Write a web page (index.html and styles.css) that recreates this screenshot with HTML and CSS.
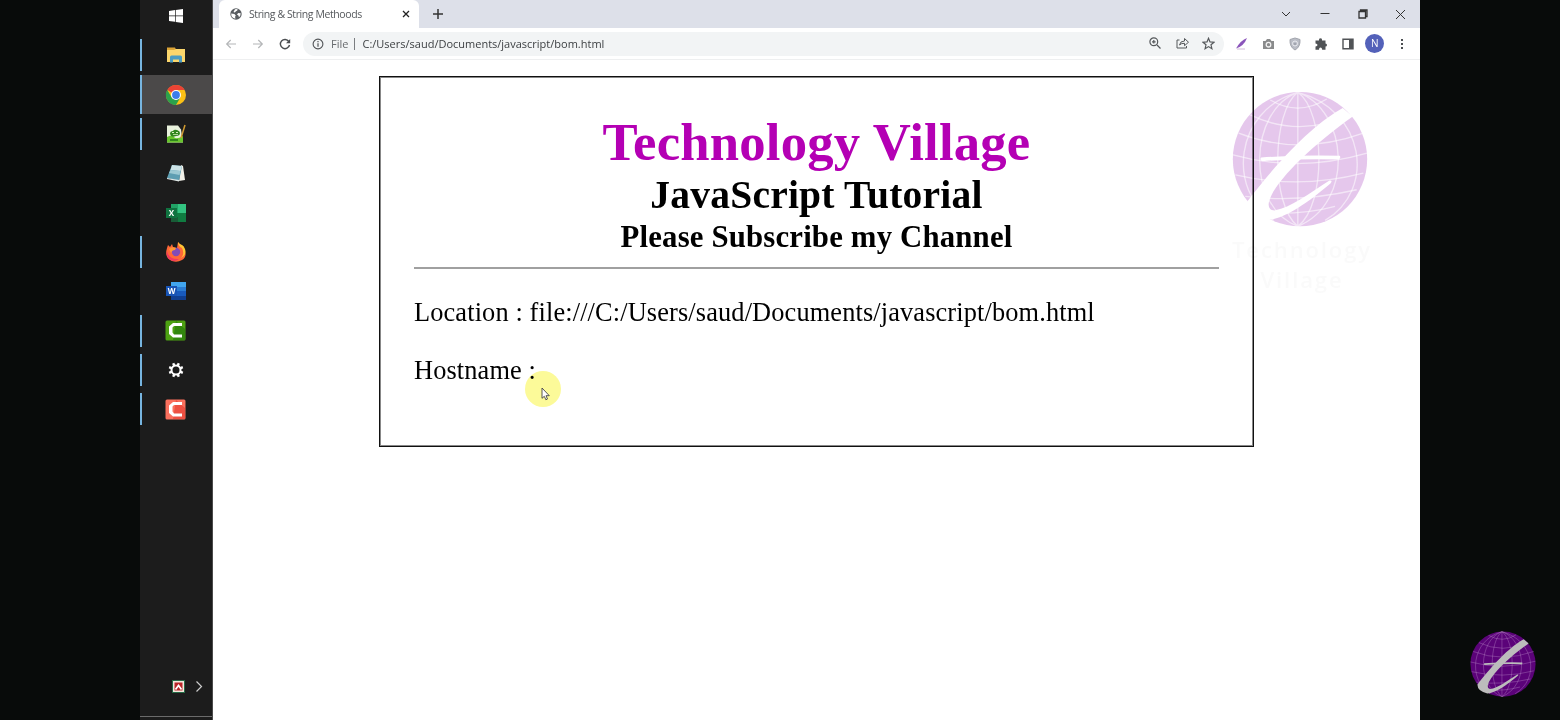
FILE: index.html
```
<!DOCTYPE html>
<html lang="en">
<head>
<meta charset="utf-8">
<title>String &amp; String Methoods</title>
<link rel="stylesheet" href="styles.css">
</head>
<body>
<svg class="defs" aria-hidden="true">
  <defs>
    <symbol id="globe" viewBox="50 48 409 409">
      <circle class="disc" cx="254.500" cy="253" r="202"/>
      <g class="grid">
        <path d="M248 52V455M248 52C170 110 165 390 248 455M248 52C330 110 335 390 248 455M248 52C100 105 90 395 248 455M248 52C400 105 420 385 248 455M248 52C55 105 35 350 175 437M248 52C450 105 485 345 330 437"/>
        <path d="M165 75Q250 125 335 72M105 120Q250 190 410 120M70 175Q250 245 445 175M53 240Q250 295 456 235M60 300Q250 345 445 295M90 365Q250 385 425 345M150 415Q270 420 360 395"/>
      </g>
      <g class="stroke">
        <path d="M383 99C310 140 215 225 96 380Q95 420 158 436C210 430 270 390 346 326Q354 316 343 317C280 358 225 398 180 407C158 408 155 390 168 363C200 300 300 205 413 125Z"/>
        <path d="M138 248Q255 240 374 243Q378 248 372 254Q255 251 140 259Q132 254 138 248Z"/>
      </g>
    </symbol>
  </defs>
</svg>

<div class="screen">
  <nav class="taskbar">
    <div class="app"><svg width="14" height="14" viewBox="0 0 14 14"><path fill="#fff" d="M0 2L6 1.100V6.500H0zM6.700 1L14 0V6.500H6.700zM0 7.300H6V12.800L0 12zM6.700 7.300H14V14L6.700 12.900z"/></svg></div>
    <div class="app open"><svg width="20" height="18" viewBox="0 0 20 18"><path fill="#dca436" d="M1 1.500h8l1 2h9v12H1z"/><path fill="#fbd66c" d="M1 4h7l2-1h9v13H1z"/><path fill="#4b9cc2" d="M4 16.500V11q0-1.500 1.500-1.500h9Q16 9.500 16 11v5.500h-3v-3H7v3z"/></svg></div>
    <div class="app open active"><svg width="22" height="22" viewBox="0 0 22 22"><circle cx="11" cy="11" r="10" fill="#fbc116"/><path fill="#ea4335" d="M11 11L2.300 6A10 10 0 0 1 19.700 6H11z"/><path fill="#2ba24c" d="M2.300 6A10 10 0 0 0 11 21L15.300 13.500 11 11 6.700 13.500z"/><circle cx="11" cy="11" r="5" fill="#fff"/><circle cx="11" cy="11" r="3.900" fill="#3b7de8"/></svg></div>
    <div class="app open"><svg width="20" height="20" viewBox="0 0 20 20"><path fill="#e9f2dd" d="M1 1.500h11l3 4 2 13H1z"/><path fill="#69c52e" d="M1 13q5-3 7 0t9-1v6.500H1z"/><path fill="#32861e" d="M4 10q0-3 3-3 1-2 4-1 3 1 3 3 0 3-4 3-5 2-6-2M4 15h8v2H4z"/><path fill="#d6edbd" d="M6 8h2v1H6zM10 8h2v1h-2zM7 10h5v.8H7z"/><path stroke="#d19b31" stroke-width="1.500" d="M19 1l-4 13"/></svg></div>
    <div class="app"><svg width="20" height="20" viewBox="0 0 20 20"><path fill="#f1f0e8" d="M15 2l2 1 2 14-6 1z"/><path fill="#5d9eb2" d="M6 2l10 1-3 15L1 15z"/><path fill="#cce3e7" d="M6 2l10 1-1.500 5L4.500 7z"/><path fill="#9cc9d3" d="M4.500 7l10 1-1 4-10.500-2z"/><path fill="#e1e9e7" d="M1 15l12 2v1.500L1 16z"/></svg></div>
    <div class="app"><svg width="20" height="20" viewBox="0 0 20 20"><path fill="#21a366" d="M5 1h7v9H5z"/><path fill="#33c481" d="M12 1h8v9h-8z"/><path fill="#107c41" d="M5 10h15v9H5z"/><path fill="#185c37" d="M5 14h7v5H5z"/><path fill="#107340" d="M0 5h11v10H0z"/><text class="letter" x="5.500" y="13">X</text></svg></div>
    <div class="app open"><svg width="22" height="22" viewBox="0 0 22 22"><path fill="#ff6738" d="M2 7l1-3 2 2 2-3 1 3 4 1 1-6q2 3 5 4l2 5q2 6-3 9t-10 1Q-1 17 2 7"/><path fill="#ffc533" d="M13 1q0 4 4 6 3 6-1 10 6-3 4-9-1-3-3-4-3-1-4-3"/><path fill="#f13860" d="M2 10q2 9 12 8-5 4-10 0-3-3-2-8"/><circle cx="11" cy="11" r="4.200" fill="#814cb7"/><path fill="#ff9835" d="M4 8q3-3 7-1l-1 2q-3 0-4 3z"/></svg></div>
    <div class="app"><svg width="20" height="20" viewBox="0 0 20 20"><path fill="#41a5ee" d="M5 1h15v5H5z"/><path fill="#2b7cd3" d="M5 6h15v4H5z"/><path fill="#185abd" d="M5 10h15v5H5z"/><path fill="#103f91" d="M5 15h15v4H5z"/><path fill="#1854b5" d="M0 5h11v10H0z"/><text class="letter" x="5.500" y="13">W</text></svg></div>
    <div class="app open"><svg width="21" height="21" viewBox="0 0 21 21"><rect x=".5" y=".5" width="20" height="20" rx="1.500" fill="#4da112"/><path fill="#32870e" d="M11 1l9 8v11H8z"/><path fill="#fff" d="M17 3v3H9L7.500 7.500v5L9 14.500h8v3H8L4 14V6.500L8 3z"/></svg></div>
    <div class="app open"><svg width="16" height="16" viewBox="0 0 16 16"><path fill="none" stroke="#fff" stroke-width="2.400" d="M9.700 3.800L10.800 1.200M12.200 6.300l2.600-1.100M12.200 9.700l2.600 1.100M9.700 12.200l1.100 2.600M6.300 12.200l-1.100 2.600M3.800 9.700l-2.600 1.100M3.800 6.300L1.200 5.200M6.300 3.800L5.200 1.200"/><circle cx="8" cy="8" r="4.500" fill="none" stroke="#fff" stroke-width="2"/></svg></div>
    <div class="app open"><svg width="21" height="21" viewBox="0 0 21 21"><rect x=".5" y=".5" width="20" height="20" rx="1.500" fill="#fa705d"/><path fill="#ed5042" d="M11 1l9 8v11H8z"/><path fill="#fff" d="M17 3v3H9L7.500 7.500v5L9 14.500h8v3H8L4 14V6.500L8 3z"/></svg></div>
    <div class="tray">
      <svg width="13" height="13" viewBox="0 0 13 13"><path fill="#256a46" d="M0 0h13v13H0z"/><path fill="#f4e9df" d="M1 1h11v11H1z"/><path fill="#b92629" d="M2.500 2.500h8v8h-8z"/><path fill="none" stroke="#fff" stroke-width="1.700" d="M3.500 9.500l3-4 3 4"/></svg>
      <svg width="8" height="13" viewBox="0 0 8 13"><path fill="none" stroke="#ccc" stroke-width="1.200" d="M1.500 1.500l5 5-5 5"/></svg>
    </div>
  </nav>

  <div class="browser">
    <header class="tabs">
      <div class="tab">
        <svg width="12" height="12" viewBox="0 0 12 12"><circle cx="6" cy="6" r="5.700" fill="#5a5e62"/><path fill="#fff" d="M1.200 5.500l3.200.4 1.400 1.500-.7 1.300.3 2Q1 10 1.200 5.500M5 1.300l2.500-.2-.2 1.500-1.600 1-.9 1L3.500 4zM8.200 5l2.500.3q0 2.700-1.800 4L8.600 7.700 7 6.500z"/></svg>
        <span class="title">String &amp; String Methoods</span>
        <svg class="close" width="8" height="8" viewBox="0 0 8 8"><path stroke="#222" stroke-width="1.300" d="M1 1l6 6M7 1L1 7"/></svg>
      </div>
      <svg class="plus" width="12" height="12" viewBox="0 0 12 12"><path stroke="#333" stroke-width="1.500" d="M6 1v10M1 6h10"/></svg>
      <div class="controls">
        <span><svg width="10" height="10" viewBox="0 0 10 10"><path d="M1 3l4 4 4-4"/></svg></span>
        <span><svg width="10" height="10" viewBox="0 0 10 10"><path d="M.5 4.500h9"/></svg></span>
        <span><svg width="10" height="10" viewBox="0 0 10 10"><path class="restore" d="M1 2.500h6.500V9H1zM2.500 2.500V1H9v6.500H7.500"/></svg></span>
        <span><svg width="11" height="11" viewBox="0 0 11 11"><path d="M1 1l9 9M10 1l-9 9"/></svg></span>
      </div>
    </header>

    <div class="toolbar">
      <span class="cell"><svg width="12" height="12" viewBox="0 0 12 12"><path class="muted" d="M11 6H1.700M5.700 2L1.700 6l4 4"/></svg></span>
      <span class="cell"><svg width="12" height="12" viewBox="0 0 12 12"><path class="muted" d="M1 6h9.300M6.300 2l4 4-4 4"/></svg></span>
      <span class="cell"><svg width="12" height="12" viewBox="0 0 12 12"><path fill="none" stroke="#4b4e51" stroke-width="1.400" d="M9.800 3.500A4.600 4.600 0 1 0 10.500 7"/><path fill="#4b4e51" d="M11.200 1v4.200H7z"/></svg></span>
      <div class="omnibox">
        <svg width="12" height="12" viewBox="0 0 12 12"><circle cx="6" cy="6" r="4.900" fill="none" stroke="#505356" stroke-width="1.100"/><path stroke="#505356" stroke-width="1.200" d="M6 5.300v3.400M6 3v1.300"/></svg>
        <span class="scheme">File</span><i class="sep"></i><span class="url">C:/Users/saud/Documents/javascript/bom.html</span>
        <div class="actions">
          <span class="cell"><svg width="12" height="12" viewBox="0 0 12 12"><path class="line" d="M8 8l3.500 3.500M3 4.800h3.600M4.800 3v3.600"/><circle class="line" cx="4.800" cy="4.800" r="3.900"/></svg></span>
          <span class="cell"><svg width="13" height="12" viewBox="0 0 13 12"><path class="line thin" d="M3.500 3H1v8h9.500V9M3.500 8q.5-4 5-4V1.500l4 3.700-4 3.500V6.300Q5 6.200 3.500 8z"/></svg></span>
          <span class="cell"><svg width="13" height="13" viewBox="0 0 13 13"><path class="line" d="M6.500 1.300L8 4.900l4 .3-3 2.600.9 3.900-3.400-2.100-3.400 2.100.9-3.900-3-2.600 4-.3z"/></svg></span>
        </div>
      </div>
      <span class="cell first"><svg width="13" height="13" viewBox="0 0 13 13"><path fill="#8b55bb" d="M12 1Q6 3 1 11.500 9 9 12 1"/><path stroke="#d2bada" d="M2 12h8"/></svg></span>
      <span class="cell"><svg width="13" height="12" viewBox="0 0 13 12"><path fill="#8a8b8c" d="M1 3h2.500L5 1h3l1.500 2H12v8H1z"/><circle cx="6.500" cy="6.700" r="2.300" fill="none" stroke="#f2f2f2" stroke-width="1.300"/></svg></span>
      <span class="cell"><svg width="12" height="14" viewBox="0 0 12 14"><path fill="#b9bcc5" stroke="#a2a5ad" d="M6 1l5 1.500Q11.500 10 6 13 .5 10 1 2.500z"/><circle cx="6" cy="6.500" r="2.500" fill="none" stroke="#e8e9ee"/><path stroke="#8b8f9b" d="M4.800 7h2.400"/></svg></span>
      <span class="cell"><svg width="12" height="12" viewBox="0 0 12 12"><path fill="#505356" d="M.5 2.500h3.500Q3.500.3 5.500.3T7 2.500h3.500v3q1.500 0 1.500 1.500t-1.500 1.500v3.200H7.200Q7 9.500 5.500 9.500T4 11.700H.5V8.500q2-.2 2-1.500t-2-1.500z"/></svg></span>
      <span class="cell"><svg width="12" height="12" viewBox="0 0 12 12"><path fill="none" stroke="#505356" stroke-width="1.400" d="M1 1.200h10v9.600H1z"/><path fill="#505356" d="M7 1h4v10H7z"/></svg></span>
      <span class="cell"><b class="avatar">N</b></span>
      <span class="cell"><svg width="4" height="12" viewBox="0 0 4 12"><path fill="#4b4e51" d="M1 1h2v2H1zM1 5h2v2H1zM1 9h2v2H1z"/></svg></span>
    </div>

    <main class="page">
      <section class="card">
        <h1>Technology Village</h1>
        <h2>JavaScript Tutorial</h2>
        <h3>Please Subscribe my Channel</h3>
        <hr>
        <p>Location : file:///C:/Users/saud/Documents/javascript/bom.html</p>
        <p>Hostname :</p>
      </section>
    </main>
  </div>
</div>

<div class="watermark">
  <svg class="globe light" width="136" height="136"><use href="#globe"/></svg>
  <div class="brand"><span>Technology</span><span>Village</span></div>
</div>
<svg class="globe badge" width="66" height="66"><use href="#globe"/></svg>
<div class="halo"></div>
<svg class="pointer" width="10" height="14" viewBox="0 0 10 14"><path fill="#fff" stroke="#444" stroke-width=".9" d="M1 1v10.300l2.300-2 1.600 3.500 1.600-.8L5 8.700h3.300z"/></svg>
</body>
</html>
```
FILE: styles.css
```
* { box-sizing: border-box; }
body {
  margin: 0;
  width: 1560px;
  height: 720px;
  overflow: hidden;
  position: relative;
  background: #080b0a;
  font-family: "Open Sans", "Noto Sans", sans-serif;
}
svg { display: block; flex: none; }
.defs { position: absolute; width: 0; height: 0; }
.screen { display: flex; width: 1280px; height: 720px; margin: 0 140px; }

/* Windows taskbar */
.taskbar {
  width: 73px;
  height: 720px;
  overflow: hidden;
  display: flex;
  flex-direction: column;
  background: #1c1c1c;
  border-right: 1px solid #4a4a4a;
  flex: none;
}
.app {
  height: 39.3px;
  flex: none;
  display: flex;
  align-items: center;
  justify-content: center;
  padding-right: 1px;
}
.app:first-child { margin-top: -3.500px; }
.app.open { background: linear-gradient(#77b5e0, #77b5e0) left center / 2px 32px no-repeat; }
.app.active {
  background: linear-gradient(#77b5e0, #77b5e0) left center / 2px 39px no-repeat, #4b4949;
}
.letter { font: bold 8px "Open Sans", sans-serif; fill: #fff; text-anchor: middle; }
.tray {
  margin: auto 0 3px;
  height: 60px;
  padding: 0 9px 0 32px;
  display: flex;
  align-items: center;
  justify-content: space-between;
  border-bottom: 1px solid #6b6b6b;
}

/* Browser frame */
.browser { flex: 1; background: #fff; min-width: 0; }
.tabs { height: 28px; display: flex; align-items: center; background: #dde0e9; padding-left: 6px; }
.tab {
  width: 200px;
  height: 28px;
  display: flex;
  align-items: center;
  padding: 0 9px 0 11px;
  background: #fff;
  border-radius: 6px 6px 0 0;
}
.title { margin-left: 7px; font-size: 10.500px; color: #55585c; letter-spacing: -.41px; white-space: nowrap; }
.close { margin-left: auto; }
.plus { margin-left: 13px; }
.controls { display: flex; margin-left: auto; }
.controls span { width: 38.200px; display: flex; justify-content: center; align-items: center; }
.controls path { fill: none; stroke: #333; stroke-width: 1; }
.controls .restore { stroke-width: 1.300; }
.toolbar {
  height: 32px;
  display: flex;
  align-items: center;
  padding-left: 5px;
  border-bottom: 1px solid #eeeff0;
}
.cell { width: 26.700px; flex: none; display: flex; justify-content: center; }
.cell.first { margin-left: 4px; }
.muted { fill: none; stroke: #b4b6b8; stroke-width: 1.200; }
.line { fill: none; stroke: #55585b; stroke-width: 1.200; }
.thin { stroke-width: 1; }
.omnibox {
  width: 921px;
  height: 24px;
  margin-left: 5px;
  padding-left: 9px;
  display: flex;
  align-items: center;
  border-radius: 12px;
  background: #f2f4f5;
  font-size: 11px;
  white-space: nowrap;
}
.scheme { margin-left: 7px; color: #686b6e; }
.sep { width: 1px; height: 12px; margin: 0 7px 0 6px; background: #7a7d80; }
.url { color: #3d4043; }
.actions { display: flex; margin-left: auto; padding-right: 2px; }
.avatar {
  width: 19px;
  height: 19px;
  border-radius: 50%;
  background: #5361b9;
  color: #fff;
  font: 10px/19px "Open Sans", sans-serif;
  text-align: center;
}

/* Document */
.page { padding: 16px 0 0 166px; }
.card {
  width: 875px;
  height: 371px;
  border: 1px solid #111;
  box-shadow: inset 0 0 0 1px #888;
  padding: 35.500px 34px 0;
  font-family: "Liberation Serif", serif;
  color: #000;
}
h1, h2, h3 { margin: 0; text-align: center; white-space: nowrap; }
h1 { font-size: 52.700px; line-height: 59px; color: #b400b4; letter-spacing: .22px; }
h2 { font-size: 39.500px; line-height: 46px; margin-top: .5px; letter-spacing: .22px; }
h3 { font-size: 30.800px; line-height: 35px; margin-top: 1.500px; letter-spacing: .16px; }
hr { height: 2px; margin: 12px 0 29px; border: 0; background: #a0a0a0; }
p { margin: 0 0 28px; font-size: 26.350px; line-height: 30px; letter-spacing: .135px; white-space: nowrap; }

/* Overlays */
.watermark { position: absolute; left: 1222px; top: 91px; width: 160px; display: flex; flex-direction: column; align-items: center; }
.brand {
  margin-top: 7px;
  display: flex;
  flex-direction: column;
  align-items: center;
  gap: 0;
  font-size: 22px;
  line-height: 30px;
  letter-spacing: 1.900px;
  font-weight: 600;
  color: rgba(120, 120, 130, .04);
}
.light { margin-right: 4px; --disc: rgba(190, 116, 208, .4); --grid: rgba(255, 255, 255, .55); --swoosh: #fff; mix-blend-mode: multiply; }
.disc { fill: var(--disc); }
.grid { fill: none; stroke: var(--grid); stroke-width: 4; }
.stroke { fill: var(--swoosh); }
.badge { position: absolute; left: 1470px; top: 631px; --disc: #5b0379; --grid: rgba(200, 160, 210, .5); --swoosh: #bcbcbc; }
.watermark { mix-blend-mode: multiply; }
.halo { position: absolute; left: 525px; top: 371px; width: 36px; height: 36px; border-radius: 50%; background: #fcfa99; mix-blend-mode: multiply; }
.pointer { position: absolute; left: 541px; top: 387px; }
```
